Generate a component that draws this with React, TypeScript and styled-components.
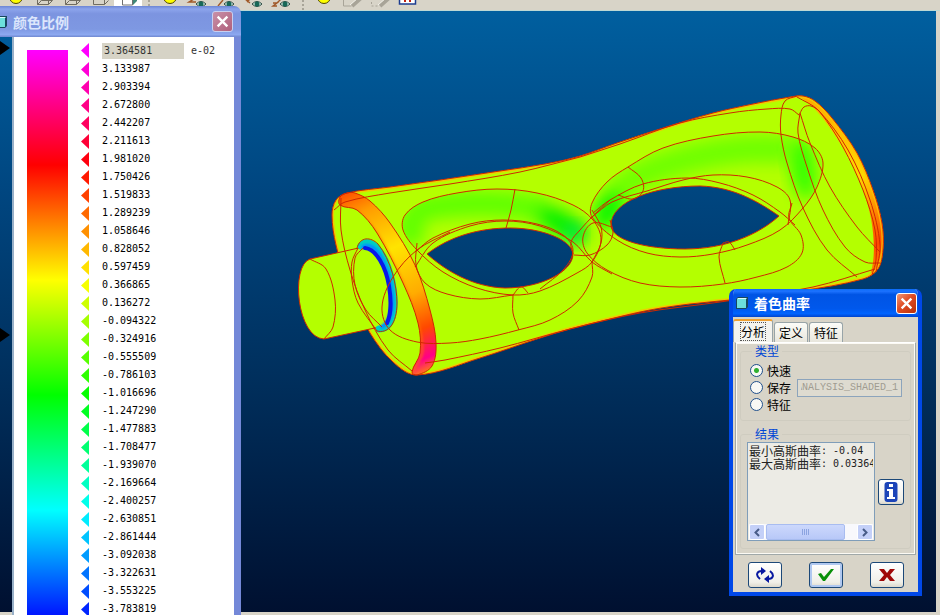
import React from 'react';
import styled, { createGlobalStyle, css } from 'styled-components';

const GlobalStyle = createGlobalStyle`
  *, *::before, *::after { box-sizing: border-box; }
  body { margin: 0; background: #d8d4c8; }
  button, input { font: inherit; }
`;

const cjk = `'Noto Sans CJK SC', sans-serif`;
const mono = `'DejaVu Sans Mono', 'Noto Sans CJK SC', monospace`;

const Desktop = styled.div`
  position: relative;
  display: flex;
  flex-direction: column;
  height: 100vh;
  overflow: hidden;
  background: #d8d4c8;
  color: #000;
  font: 12px/16px ${cjk};
`;

const Toolbar = styled.header`
  display: flex;
  flex: none;
  align-items: flex-end;
  height: 11px;
  padding-left: 2px;
  overflow: hidden;
  border-bottom: 1px solid #bcd8d4;
`;

const ToolButton = styled.button<{ $pressed?: boolean }>`
  display: flex;
  flex: none;
  justify-content: center;
  width: 28px;
  height: 10px;
  padding: 0;
  border: 1px none #7c98b8;
  background: ${(p) => (p.$pressed ? '#fff' : 'transparent')};
`;

const Grip = styled.span`
  flex: none;
  width: 2px;
  height: 10px;
  margin: 0 6px;
  border-left: 2px dotted #a8a498;
`;

const Workspace = styled.main`
  flex: 1;
  min-height: 0;
  margin: 0 4px 3px 0;
  background: linear-gradient(#005f9f, #004680 30%, #00305e 60%, #001030);
`;

const Scene = styled.svg`
  display: block;
  width: 100%;
  height: 100%;
`;

const ScaleWindow = styled.aside`
  position: absolute;
  top: 6px;
  bottom: 0;
  left: 0;
  display: flex;
  flex-direction: column;
  width: 241px;
  overflow: hidden;
  border-radius: 0 7px 0 0;
`;

const TitleBar = styled.div<{ $active?: boolean }>`
  display: flex;
  flex: none;
  align-items: center;
  gap: 6px;
  font: bold 14px/20px ${cjk};
  ${(p) =>
    p.$active
      ? css`
          height: 28px;
          padding: 0 5px 0 7px;
          color: #fff;
          background: linear-gradient(#0a6cf8, #1c72ff 8%, #0054e4 20%, #0058ec 70%, #0064ff 88%, #0044cc);
        `
      : css`
          height: 31px;
          padding: 0 8px 0 0;
          color: #dce6fc;
          background: linear-gradient(#6c86d4, #8ca4ec 10%, #7c94e0 25%, #7e98e2 75%, #8ca8f0 92%, #7088d0);
        `}
`;

const Title = styled.h2`
  flex: 1;
  margin: 0;
  font: inherit;
`;

const CloseButton = styled.button<{ $active?: boolean }>`
  display: grid;
  place-items: center;
  width: 21px;
  height: 21px;
  padding: 0;
  border: 1px solid #fff;
  border-radius: 3px;
  background: ${(p) =>
    p.$active ? 'linear-gradient(135deg, #f09878, #e04c24 45%, #b83008)' : 'linear-gradient(135deg, #c890a8, #b0607c)'};
  border-color: ${(p) => (p.$active ? '#fff' : '#c8d0f0')};
`;

const ScaleBody = styled.div`
  display: flex;
  flex: 1;
  min-height: 0;
`;

const Gutter = styled.div`
  display: flex;
  flex-direction: column;
  flex: none;
  gap: 273px;
  width: 12px;
  padding-top: 4px;
`;

const Pointer = styled.svg`
  display: block;
  flex: none;
  width: 10px;
  height: 14px;
`;

const ScalePanel = styled.div`
  display: flex;
  flex: 1;
  align-items: flex-start;
  gap: 13px;
  padding: 4px 0 0 13px;
  overflow: hidden;
  border-left: 2px solid #98b0c8;
  border-right: 7px solid #7488d8;
  background: #fff;
`;

const ColorBar = styled.div`
  flex: none;
  align-self: stretch;
  width: 41px;
  margin-top: 9px;
  background: linear-gradient(#f0f, #f00 115px, #ff0 230px, #0f0 345px, #0ff 460px, #00f 575px);
`;

const Levels = styled.ul`
  margin: 0;
  padding: 0;
  list-style: none;
  font: 10px/18px ${mono};
`;

const Level = styled.li`
  display: flex;
  align-items: center;
  gap: 13px;
  height: 18px;
  &:first-child { height: 19px; }
`;

const Swatch = styled.svg`
  flex: none;
  width: 8px;
  height: 15px;
`;

const MaxField = styled.input`
  width: 82px;
  height: 16px;
  padding: 0 2px;
  border: 0;
  background: #d6d3c6;
  color: #333;
`;

const Exponent = styled.label`
  margin-left: -6px;
  color: #333;
`;

const Dialog = styled.section`
  position: absolute;
  top: 289px;
  left: 729px;
  width: 193px;
  overflow: hidden;
  border: 4px solid #0048e8;
  border-top: 0;
  border-radius: 7px 7px 0 0;
  background: #d8d4c8;
`;

const DialogTitle = styled(TitleBar)`
  margin: 0 -4px;
`;

const DialogBody = styled.div`
  padding: 3px 2px 4px;
`;

const Tabs = styled.div`
  display: flex;
  align-items: flex-end;
  gap: 1px;
  height: 22px;
`;

const Tab = styled.button<{ $selected?: boolean }>`
  width: 34px;
  height: 20px;
  padding: 0;
  border: 1px solid #98a4a8;
  border-bottom: 0;
  border-radius: 3px 3px 0 0;
  background: linear-gradient(#fcfcf8, #e8e6dc);
  line-height: 18px;
  ${(p) =>
    p.$selected &&
    css`
      width: 40px;
      height: 23px;
      margin-left: -2px;
      border-top: 2px solid #f0a030;
      background: #f4f3ee;
      line-height: 16px;
    `}
`;

const FocusMark = styled.span`
  outline: 1px dotted #555;
`;

const TabPanel = styled.div`
  display: flex;
  flex-direction: column;
  gap: 5px;
  padding: 0 4px 5px;
  border: 1px solid #a0a8a8;
  border-top-color: #fff;
  box-shadow: inset 0 0 0 1px #fcfaf4;
`;

const Group = styled.fieldset`
  min-width: 0;
  margin: 0;
  padding: 0 6px 7px;
  border: 1px solid #cfccc0;
  border-radius: 3px;
`;

const Legend = styled.legend`
  margin-left: 5px;
  padding: 0 3px;
  color: #0046d5;
  line-height: 16px;
`;

const Options = styled.div`
  padding-top: 3px;
`;

const OptionRow = styled.div`
  display: flex;
  align-items: center;
  height: 17px;
  padding-left: 3px;
`;

const Option = styled.label`
  display: flex;
  flex: none;
  align-items: center;
  gap: 4px;
  width: 47px;
`;

const Radio = styled.input`
  flex: none;
  appearance: none;
  width: 13px;
  height: 13px;
  margin: 0;
  border: 1px solid #20508c;
  border-radius: 50%;
  background: #f8f8f4;
  &:checked {
    background: radial-gradient(circle, #30b030 0 2px, #f8f8f4 3px);
  }
`;

const NameField = styled.input`
  flex: 1;
  min-width: 0;
  height: 18px;
  margin-right: 2px;
  padding: 0 3px;
  border: 1px solid #8ca4bc;
  background: #dedbd0;
  color: #a09c90;
  direction: rtl;
  font: 10px/14px 'Liberation Mono', monospace;
`;

const ResultRow = styled.div`
  display: flex;
  align-items: center;
  gap: 3px;
`;

const ResultBox = styled.div`
  display: flex;
  flex: 1;
  flex-direction: column;
  justify-content: space-between;
  min-width: 0;
  height: 99px;
  padding: 1px 1px 0 1px;
  border: 1px solid #7f9db9;
  background: #ecebe5;
`;

const ResultText = styled.output`
  display: block;
  overflow-x: clip;
  color: #222;
  white-space: nowrap;
`;

const ResultLine = styled.div`
  display: flex;
  height: 13px;
  line-height: 13px;
`;

const Figure = styled.span`
  font: 10px/13px ${mono};
  white-space: pre;
`;

const ScrollBar = styled.div`
  display: flex;
  height: 16px;
  background: #f8f8fc;
`;

const ScrollArrow = styled.button`
  display: grid;
  place-items: center;
  width: 16px;
  padding: 0;
  border: 1px solid #fff;
  border-radius: 2px;
  background: #c4d0f8;
`;

const ScrollThumb = styled.div`
  display: grid;
  place-items: center;
  flex: 1;
  margin: 0 12px 0 1px;
  border: 1px solid #a8bcf0;
  border-radius: 2px;
  background: linear-gradient(#ccd8fc, #b8c8f8);
`;

const PushButton = styled.button<{ $square?: boolean; $default?: boolean }>`
  display: grid;
  place-items: center;
  flex: none;
  width: ${(p) => (p.$square ? 26 : 34)}px;
  height: 26px;
  padding: 0;
  border: 1px solid #1c4878;
  border-radius: 3px;
  background: linear-gradient(#fff, #f0efe8 80%, #dcd8cc);
  box-shadow: ${(p) => (p.$default ? 'inset 0 0 0 2px #b0c8f0' : 'none')};
`;

const Actions = styled.footer`
  display: flex;
  justify-content: space-between;
  padding: 7px 12px 0 13px;
`;

type Pt = [number, number];

// Spline through the points; each tangent is scaled by the length of its own
// segment so unevenly spaced points still give a round curve.
function smooth(points: Pt[], closed = false): string {
  const n = points.length;
  const at = (i: number): Pt => (closed ? points[(i + n) % n] : points[Math.max(0, Math.min(n - 1, i))]);
  const dist = (p: Pt, q: Pt) => Math.hypot(q[0] - p[0], q[1] - p[1]) || 1;
  let d = `M${points[0].join(' ')}`;
  for (let i = 0; i < (closed ? n : n - 1); i++) {
    const [a, b, c, e] = [at(i - 1), at(i), at(i + 1), at(i + 2)];
    const len = dist(b, c) / 3;
    const k1 = len / dist(a, c);
    const k2 = len / dist(b, e);
    d += `C${[b[0] + (c[0] - a[0]) * k1, b[1] + (c[1] - a[1]) * k1, c[0] - (e[0] - b[0]) * k2, c[1] - (e[1] - b[1]) * k2, c[0], c[1]]
      .map((v) => v.toFixed(1))
      .join(' ')}`;
  }
  return d + (closed ? 'Z' : '');
}

const silhouette = smooth(
  [[347, 193], [390, 187], [440, 180], [500, 171], [545, 164], [580, 156], [617, 143], [663, 128], [713, 113], [753, 104], [790, 97], [803, 96], [815, 101], [832, 118], [857, 153], [873, 190], [882, 223], [883, 250], [878, 269], [863, 279], [800, 291], [730, 300], [690, 304], [650, 310], [610, 319], [570, 329], [537, 339], [480, 358], [417, 375], [393, 362], [370, 333], [350, 292], [336, 245], [332, 215], [336, 200]],
  true,
);
const stub = 'M310 259C290 266 297 338 324 339L384 326L363 247Z';
const band = smooth(
  [[340, 205], [340, 197], [347, 193], [355, 193], [370, 201], [390, 223], [415, 265], [430, 310], [436, 343], [432, 366], [417, 375], [412, 372], [420, 353], [418, 323], [403, 283], [377, 233], [357, 210]],
  true,
);
const leftPocket: Pt[] = [[417, 250], [403, 230], [405, 215], [423, 202], [457, 193], [497, 189], [537, 193], [573, 205], [593, 220], [601, 240], [592, 262], [577, 273], [540, 291], [513, 295], [477, 288], [443, 272]];
const rightPocket: Pt[] = [[592, 217], [592, 203], [607, 182], [628, 167], [663, 148], [713, 136], [760, 132], [793, 137], [815, 148], [823, 163], [817, 187], [803, 208], [780, 230], [747, 245], [713, 254], [680, 257], [647, 253], [617, 240]];
const leftHole = 'M427 254C450 236 480 228 510 228C542 228 572 240 573 254C573 272 540 288 505 288C472 287 445 270 427 254Z';
const rightHole = 'M611 225C611 201 655 186 700 186C735 187 760 203 779 216C758 235 725 249 685 249C645 249 611 240 611 225Z';

const wires: string[] = [
  smooth(leftPocket, true),
  smooth(rightPocket, true),
  smooth([[310, 259], [326, 269], [335, 300], [333, 327], [324, 339]]),
  smooth([[341, 198], [341, 230], [350, 270], [365, 310], [388, 350], [412, 371]]),
  smooth([[334, 210], [345, 202], [390, 193], [450, 184], [520, 172], [580, 157]]),
  smooth([[358, 248], [352, 262], [352, 280], [358, 303], [377, 331]]),
  smooth([[363, 248], [355, 258], [355, 285], [366, 310], [382, 327]]),
  smooth([[415, 252], [433, 238], [470, 224], [503, 220], [537, 224], [563, 235], [573, 250], [564, 269], [540, 289]]),
  smooth([[415, 267], [433, 243], [470, 226], [505, 221], [540, 226], [573, 242], [592, 262], [612, 274]]),
  smooth([[417, 243], [416, 265], [425, 283], [447, 294], [480, 299], [513, 295]]),
  smooth([[592, 262], [592, 277], [578, 301], [550, 320], [518, 330], [480, 339], [450, 343], [417, 342], [390, 330], [382, 307], [393, 277], [417, 250], [450, 232]]),
  smooth([[515, 189], [511, 210], [506, 228]]),
  smooth([[513, 295], [513, 313], [519, 330]]),
  smooth([[513, 295], [521, 287], [528, 293]]),
  smooth([[593, 213], [610, 200], [643, 184], [687, 178], [720, 183], [753, 195], [780, 212], [795, 225]]),
  smooth([[592, 217], [612, 202], [647, 191], [683, 180], [713, 175], [747, 177], [777, 187], [790, 200], [788, 225]]),
  smooth([[792, 203], [789, 218], [801, 235], [802, 253], [787, 267], [757, 277], [723, 284], [680, 287], [640, 283], [607, 270], [587, 253], [583, 237], [593, 223], [612, 227]]),
  smooth([[723, 243], [719, 257], [725, 283]]),
  smooth([[723, 243], [729, 242], [735, 250]]),
  smooth([[628, 167], [641, 178], [643, 191], [633, 199], [618, 195]]),
  smooth([[573, 254], [571, 242], [580, 230], [593, 216], [610, 200]]),
  smooth([[574, 255], [590, 255], [607, 245], [613, 233], [610, 220]]),
  smooth([[592, 210], [601, 227], [601, 243], [592, 262]]),
  smooth([[797, 96], [785, 101], [781, 115], [781, 135], [787, 163], [803, 208], [827, 250], [857, 277]]),
  smooth([[800, 113], [798, 133], [807, 167], [823, 210], [845, 247], [865, 262], [880, 263]]),
  smooth([[800, 113], [810, 143], [830, 187], [857, 227], [880, 252]]),
  smooth([[800, 113], [804, 107], [811, 106], [820, 112], [843, 147], [863, 190], [875, 230], [876, 260], [872, 275]]),
  smooth([[797, 97], [818, 110], [848, 150], [870, 200], [880, 245], [876, 272]]),
  smooth([[580, 157], [620, 144], [680, 123], [730, 113], [767, 109], [790, 109], [799, 115]]),
  smooth([[425, 363], [445, 360], [500, 348], [570, 329], [640, 313], [720, 302], [813, 287], [875, 269]]),
];

const yPad = 11;

function Model() {
  return (
    <Scene viewBox={`0 ${yPad} 936 601`} role="img" aria-label="着色曲率">
      <defs>
        <linearGradient id="band" gradientUnits="userSpaceOnUse" x1="345" y1="193" x2="427" y2="375">
          <stop offset="0" stopColor="#ff5000" />
          <stop offset=".12" stopColor="#ff9c00" />
          <stop offset=".35" stopColor="#ffe400" />
          <stop offset=".6" stopColor="#ffac00" />
          <stop offset=".78" stopColor="#ff4800" />
          <stop offset=".92" stopColor="#ff0088" />
          <stop offset="1" stopColor="#ff9000" />
        </linearGradient>
        <linearGradient id="rim" gradientUnits="userSpaceOnUse" x1="800" y1="96" x2="880" y2="275">
          <stop offset="0" stopColor="#ffa800" />
          <stop offset=".5" stopColor="#ffd800" />
          <stop offset=".85" stopColor="#ff4800" />
          <stop offset="1" stopColor="#ff9800" />
        </linearGradient>
        <filter id="soft" x="-40%" y="-40%" width="180%" height="180%">
          <feGaussianBlur stdDeviation="8" />
        </filter>
        <filter id="fine" x="-20%" y="-20%" width="140%" height="140%">
          <feGaussianBlur stdDeviation="1" />
        </filter>
        <clipPath id="leftPocket"><path d={smooth(leftPocket, true)} /></clipPath>
        <clipPath id="rightPocket"><path d={smooth(rightPocket, true)} /></clipPath>
        <clipPath id="bandClip"><path d={band} /></clipPath>
        <clipPath id="bodyClip"><path d={silhouette} /></clipPath>
        <mask id="holes">
          <rect y={yPad} width="936" height="601" fill="#fff" />
          <path d={leftHole} fill="#000" />
          <path d={rightHole} fill="#000" />
        </mask>
      </defs>
      <g mask="url(#holes)">
        <path d={silhouette} fill="#b4ff00" />
        <g clipPath="url(#leftPocket)">
          <path d="M414 245Q402 214 430 207Q490 198 545 210" fill="none" stroke="#60ff00" strokeWidth="26" filter="url(#soft)" />
          <ellipse cx="562" cy="224" rx="28" ry="12" transform="rotate(30 562 224)" fill="#00f000" filter="url(#soft)" />
          <ellipse cx="574" cy="234" rx="9" ry="10" fill="#00e850" filter="url(#soft)" />
        </g>
        <g clipPath="url(#rightPocket)">
          <path d="M605 220Q612 184 660 167Q730 144 790 150" fill="none" stroke="#70ff00" strokeWidth="28" filter="url(#soft)" />
          <ellipse cx="803" cy="168" rx="13" ry="32" transform="rotate(-8 803 168)" fill="#38ff00" filter="url(#soft)" />
          <ellipse cx="608" cy="212" rx="10" ry="20" transform="rotate(30 608 212)" fill="#00f400" filter="url(#soft)" />
        </g>
        <g clipPath="url(#bodyClip)">
          <path d="M797 96C812 95 835 118 857 153C878 192 888 230 884 250C882 266 880 274 868 280C877 262 876 225 863 190C850 155 820 105 797 96Z" fill="url(#rim)" />
          <path d={silhouette} fill="none" stroke="#ffc000" strokeWidth="4" opacity=".8" />
        </g>
        <path d={band} fill="url(#band)" />
        <g clipPath="url(#bandClip)">
          <path d={smooth([[357, 210], [377, 233], [403, 283], [418, 323], [422, 353], [412, 372]])} fill="none" stroke="#ff7800" strokeWidth="3" opacity=".5" filter="url(#fine)" />
        </g>
        <path d={silhouette} fill="none" stroke="#d02800" strokeWidth="1" />
      </g>
      <path d={stub} fill="#b4ff00" />
      <path d="M363 247L310 259C290 266 297 338 324 339L384 326" fill="none" stroke="#d02800" />
      <g fill="none" strokeLinecap="round">
        <path d="M361 246C370 235 386 253 392 282C398 312 391 329 379 329" stroke="#00d0c0" strokeWidth="7" />
        <path d="M363 247C375 241 386 262 390.500 285C395 309 390 322 382 327" stroke="#0090ff" strokeWidth="4" filter="url(#fine)" />
        <path d="M365 248C376 249 386 267 389 286C392 304 390 317 387 323" stroke="#0818e8" strokeWidth="4" />
        <path d="M357 248C360 236 371 237 378 244C391 260 397 286 397 303C397 324 388 334 377 331" stroke="#b83800" />
      </g>
      <g fill="none" stroke="#d02800" strokeWidth="1">
        <path d={band} />
        <path d={leftHole} />
        <path d={rightHole} />
        {wires.map((d, i) => <path key={i} d={d} />)}
      </g>
    </Scene>
  );
}

const Cross = ({ size = 11 }: { size?: number }) => (
  <svg width={size} height={size} viewBox="0 0 12 12" aria-hidden="true">
    <path d="M1.5 1.5l9 9M10.5 1.5l-9 9" stroke="#fff" strokeWidth="2.2" />
  </svg>
);

const WindowIcon = ({ cut }: { cut?: boolean }) => (
  <svg width={cut ? 7 : 12} height="12" viewBox={cut ? '5 0 7 12' : '0 0 12 12'} aria-hidden="true">
    <path d="M0 2l2-2h10v10l-2 2H0z" fill="#184860" />
    <path d="M1 2h9v9H1z" fill="#6ce0dc" />
    <path d="M1 2l1-1h9l-1 1z" fill="#d8fcfc" />
  </svg>
);

type ToolKind = 'dot' | 'cube' | 'solid' | 'eye' | 'sketch' | 'box';

function ToolIcon({ kind, variant = 0 }: { kind: ToolKind; variant?: number }) {
  return (
    <svg width="28" height="10" viewBox="0 0 28 10" aria-hidden="true">
      {kind === 'dot' && <circle cx="14" cy="-3" r="6.5" fill="#ff0" stroke="#504800" />}
      {kind === 'cube' && (
        <path d={`M7.500 -4V4.500h11V-4M18.500 4.500l4-4${variant < 2 ? 'M7.500 4.500l4-4h11' : ''}${variant < 1 ? 'M11 .5V-3' : ''}`} fill="none" stroke="#706c60" />
      )}
      {kind === 'solid' && (
        <>
          <path d="M8.500 -2v7h10v-7" fill="#fff" stroke="#707070" />
          <path d="M19 5V-1h4v2z" fill="#408878" />
        </>
      )}
      {kind === 'eye' && (
        <>
          <path d={['M10 -1L5 2h7', 'M11 0L6 6', 'M5 -1l5 4M10-1L7 2', 'M5 3h4l-4 3h4M13-1l-4 4'][variant]} fill="none" stroke="#a05828" strokeWidth="1.4" />
          <path d="M12 4q5-5 10 0q-5 5-10 0z" fill="#d8f0e8" stroke="#284840" />
          <circle cx="17" cy="4" r="2.500" fill="#186858" />
        </>
      )}
      {kind === 'sketch' && (
        <>
          <path d="M5.500 -2v8h8" fill="none" stroke="#a8a498" strokeDasharray={variant ? '2 2' : undefined} />
          <path d="M23 -2l-9 8" stroke="#a8a498" strokeWidth="4" />
          <path d="M20 -2l-8 7" stroke="#f4f2ea" />
        </>
      )}
      {kind === 'box' && (
        <>
          <path d="M5.500 -4v8h16v-8" fill="#fff" stroke="#1c3c90" strokeWidth="1.500" />
          <path d="M11-2v4M16-2v4" stroke="#c02010" strokeWidth="2" />
        </>
      )}
    </svg>
  );
}

const tools: ({ kind: ToolKind; label: string; variant?: number; pressed?: boolean } | null)[] = [
  { kind: 'dot', label: '重画' },
  { kind: 'cube', label: '线框' },
  { kind: 'cube', label: '隐藏线', variant: 1 },
  { kind: 'cube', label: '无隐藏线', variant: 2 },
  { kind: 'solid', label: '着色', pressed: true },
  null,
  { kind: 'dot', label: '显示' },
  { kind: 'eye', label: '基准平面', variant: 0 },
  { kind: 'eye', label: '基准轴', variant: 1 },
  { kind: 'eye', label: '基准点', variant: 2 },
  { kind: 'eye', label: '坐标系', variant: 3 },
  null,
  { kind: 'dot', label: '注释' },
  { kind: 'sketch', label: '草绘' },
  { kind: 'sketch', label: '参照', variant: 1 },
  { kind: 'box', label: '窗口' },
];

const levels = [
  '3.133987', '2.903394', '2.672800', '2.442207', '2.211613', '1.981020', '1.750426', '1.519833', '1.289239', '1.058646',
  '0.828052', '0.597459', '0.366865', '0.136272', '-0.094322', '-0.324916', '-0.555509', '-0.786103', '-1.016696',
  '-1.247290', '-1.477883', '-1.708477', '-1.939070', '-2.169664', '-2.400257', '-2.630851', '-2.861444', '-3.092038',
  '-3.322631', '-3.553225', '-3.783819',
];

const LevelMark = ({ step }: { step: number }) => (
  <Swatch viewBox="0 0 8 15" aria-hidden="true">
    <path d="M0 7.500L8 0v15z" fill={`hsl(${(300 + step * 9.4) % 360} 100% 50%)`} />
  </Swatch>
);

const Arrow = ({ flip }: { flip?: boolean }) => (
  <svg width="8" height="9" viewBox="0 0 8 9" aria-hidden="true">
    <path d={flip ? 'M2 1l3.500 3.500L2 8' : 'M6 1L2.500 4.500L6 8'} fill="none" stroke="#485c88" strokeWidth="2" />
  </svg>
);

const Marker = () => (
  <Pointer viewBox="0 0 10 14" aria-hidden="true">
    <path d="M0 0l10 7L0 14z" fill="#000" />
  </Pointer>
);

export default function App() {
  return (
    <Desktop>
      <GlobalStyle />
      <Toolbar>
        {tools.map((tool, i) =>
          tool ? (
            <ToolButton key={i} type="button" aria-label={tool.label} $pressed={tool.pressed}>
              <ToolIcon kind={tool.kind} variant={tool.variant} />
            </ToolButton>
          ) : (
            <Grip key={i} />
          ),
        )}
      </Toolbar>
      <Workspace>
        <Model />
      </Workspace>

      <ScaleWindow>
        <TitleBar>
          <WindowIcon cut />
          <Title>颜色比例</Title>
          <CloseButton type="button" aria-label="关闭"><Cross size={13} /></CloseButton>
        </TitleBar>
        <ScaleBody>
          <Gutter>
            <Marker />
            <Marker />
          </Gutter>
          <ScalePanel>
            <ColorBar />
            <Levels>
              <Level>
                <LevelMark step={0} />
                <MaxField id="scale-max" defaultValue="3.364581" />
                <Exponent htmlFor="scale-max">e-02</Exponent>
              </Level>
              {levels.map((value, i) => (
                <Level key={value}>
                  <LevelMark step={i + 1} />
                  {value}
                </Level>
              ))}
            </Levels>
          </ScalePanel>
        </ScaleBody>
      </ScaleWindow>

      <Dialog role="dialog" aria-labelledby="dialog-title">
        <DialogTitle $active>
          <WindowIcon />
          <Title id="dialog-title">着色曲率</Title>
          <CloseButton type="button" aria-label="关闭" $active><Cross size={13} /></CloseButton>
        </DialogTitle>
        <DialogBody>
          <Tabs role="tablist">
            <Tab type="button" role="tab" aria-selected="true" $selected><FocusMark>分析</FocusMark></Tab>
            <Tab type="button" role="tab" aria-selected="false">定义</Tab>
            <Tab type="button" role="tab" aria-selected="false">特征</Tab>
          </Tabs>
          <TabPanel role="tabpanel">
            <Group>
              <Legend>类型</Legend>
              <Options>
                <OptionRow>
                  <Option><Radio type="radio" name="kind" defaultChecked />快速</Option>
                </OptionRow>
                <OptionRow>
                  <Option><Radio type="radio" name="kind" />保存</Option>
                  <NameField aria-label="名称" disabled defaultValue="ANALYSIS_SHADED_1" />
                </OptionRow>
                <OptionRow>
                  <Option><Radio type="radio" name="kind" />特征</Option>
                </OptionRow>
              </Options>
            </Group>
            <Group>
              <Legend>结果</Legend>
              <ResultRow>
                <ResultBox>
                  <ResultText>
                    <ResultLine>最小高斯曲率<Figure>: -0.04</Figure></ResultLine>
                    <ResultLine>最大高斯曲率<Figure>: 0.0336458</Figure></ResultLine>
                  </ResultText>
                  <ScrollBar>
                    <ScrollArrow type="button" aria-label="向左"><Arrow /></ScrollArrow>
                    <ScrollThumb>
                      <svg width="8" height="6" viewBox="0 0 8 6" aria-hidden="true">
                        <path d="M.5 0v6M2.500 0v6M4.500 0v6M6.500 0v6" stroke="#8ca4e0" />
                      </svg>
                    </ScrollThumb>
                    <ScrollArrow type="button" aria-label="向右"><Arrow flip /></ScrollArrow>
                  </ScrollBar>
                </ResultBox>
                <PushButton type="button" aria-label="信息" $square>
                  <svg width="14" height="20" viewBox="0 0 14 20" aria-hidden="true">
                    <rect width="13" height="20" x=".5" rx="3" fill="#1c44b8" />
                    <path d="M5 2h4v3H5zM3 7h6v8h2v2H3v-2h2V9H3z" fill="#fff" />
                  </svg>
                </PushButton>
              </ResultRow>
            </Group>
          </TabPanel>
          <Actions>
            <PushButton type="button" aria-label="重复">
              <svg width="20" height="16" viewBox="0 0 20 16" aria-hidden="true">
                <path d="M5 12C0 8 2 4 7 4M15 4c5 4 3 8-2 8" fill="none" stroke="#0818a0" strokeWidth="2" />
                <path d="M6 0l5 4-5 4zM14 8v8l-5-4z" fill="#0818a0" />
              </svg>
            </PushButton>
            <PushButton type="button" aria-label="确定" $default>
              <svg width="18" height="14" viewBox="0 0 18 14" aria-hidden="true">
                <path d="M1 6l3-1 3 4L14 1h3L8 13H6z" fill="#089008" />
              </svg>
            </PushButton>
            <PushButton type="button" aria-label="取消">
              <svg width="18" height="14" viewBox="0 0 18 14" aria-hidden="true">
                <path d="M1 1h5l3 4 3-4h5l-5 6 5 6h-5l-3-4-3 4H1l5-6z" fill="#a00808" />
              </svg>
            </PushButton>
          </Actions>
        </DialogBody>
      </Dialog>
    </Desktop>
  );
}
